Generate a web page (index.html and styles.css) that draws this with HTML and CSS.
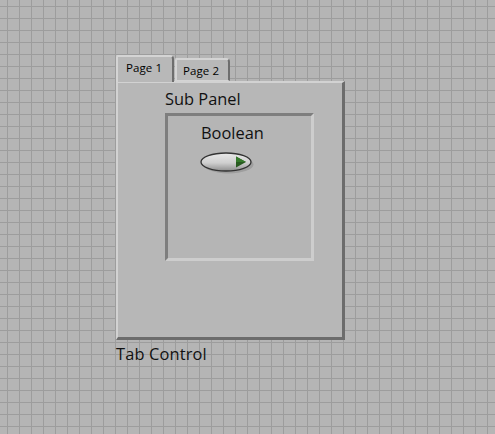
FILE: index.html
```html
<!DOCTYPE html>
<html>
<head>
<meta charset="utf-8">
<link rel="stylesheet" href="styles.css">
</head>
<body>
<div class="canvas">
  <div class="tabctl">
    <div class="tabs">
      <div class="tab active">Page 1</div>
      <div class="tab">Page 2</div>
    </div>
    <div class="panel">
      <div class="sub-label">Sub Panel</div>
      <div class="subpanel">
        <div class="bool-label">Boolean</div>
        <svg class="led" width="56" height="24" viewBox="0 0 56 24">
          <defs>
            <linearGradient id="g" x1="0" y1="0" x2="0" y2="1">
              <stop offset="0" stop-color="#e8e8e8"/>
              <stop offset="0.55" stop-color="#cfcfcf"/>
              <stop offset="1" stop-color="#8e8e8e"/>
            </linearGradient>
          </defs>
          <ellipse cx="28.5" cy="13.5" rx="25" ry="9" fill="#8a8a8a" opacity="0.55"/>
          <ellipse cx="26" cy="11" rx="25" ry="9" fill="url(#g)" stroke="#333" stroke-width="1.3"/>
          <path d="M36 5.5 L46 11 L36 16.5 Z" fill="#285a20"/>
          <path d="M36 5.5 L46 11 L36 11 Z" fill="#357a2b"/>
        </svg>
      </div>
    </div>
    <div class="ctl-label">Tab Control</div>
  </div>
</div>
</body>
</html>
```
FILE: styles.css
```css
html, body {
  margin: 0;
  padding: 0;
}
body {
  width: 495px;
  height: 434px;
  overflow: hidden;
  background-color: #b5b5b5;
  background-image:
    linear-gradient(to right, #9d9d9d 1px, transparent 1px),
    linear-gradient(to bottom, #9d9d9d 1px, transparent 1px);
  background-size: 12px 12px;
  background-position: 7px 6px;
  font-family: "Open Sans", "Noto Sans", sans-serif;
  color: #111;
}
.canvas {
  padding: 55px 0 0 116px;
}
.tabctl {
  width: 229px;
}
.tabs {
  display: flex;
  align-items: flex-end;
  height: 26px;
}
.tab {
  box-sizing: border-box;
  background: #b8b8b8;
  font-size: 11.5px;
  letter-spacing: 0.1px;
  color: #000;
  border-top: 2px solid #d4d4d4;
  border-left: 2px solid #d4d4d4;
  border-right: 2px solid #6e6e6e;
  border-top-left-radius: 2px;
  border-top-right-radius: 4px;
}
.tab.active {
  width: 58px;
  height: 27px;
  padding: 3px 0 0 8px;
  position: relative;
  z-index: 1;
  margin-bottom: -1px;
}
.tab:not(.active) {
  width: 55px;
  height: 23px;
  margin-left: 1px;
  padding: 3px 0 0 6px;
  border-bottom: 1px solid #d4d4d4;
}
.panel {
  box-sizing: border-box;
  width: 229px;
  height: 259px;
  background: #b7b7b7;
  border-top: 2px solid #d2d2d2;
  border-left: 2px solid #d2d2d2;
  border-right: 3px solid #6c6c6c;
  border-bottom: 3px solid #6c6c6c;
  padding: 5px 0 0 47px;
}
.sub-label {
  font-size: 16.4px;
  line-height: 22px;
  height: 25px;
}
.subpanel {
  box-sizing: border-box;
  width: 149px;
  height: 148px;
  border-top: 3px solid #7e7e7e;
  border-left: 3px solid #7e7e7e;
  border-right: 3px solid #cdcdcd;
  border-bottom: 3px solid #cdcdcd;
  padding: 6px 0 0 33px;
  background: #b5b5b5;
}
.bool-label {
  font-size: 16.4px;
  line-height: 22px;
  height: 29px;
}
.led {
  display: block;
  margin-left: -1px;
}
.ctl-label {
  font-size: 16.4px;
  line-height: 22px;
  margin-top: 3px;
  letter-spacing: 0.15px;
}
```
